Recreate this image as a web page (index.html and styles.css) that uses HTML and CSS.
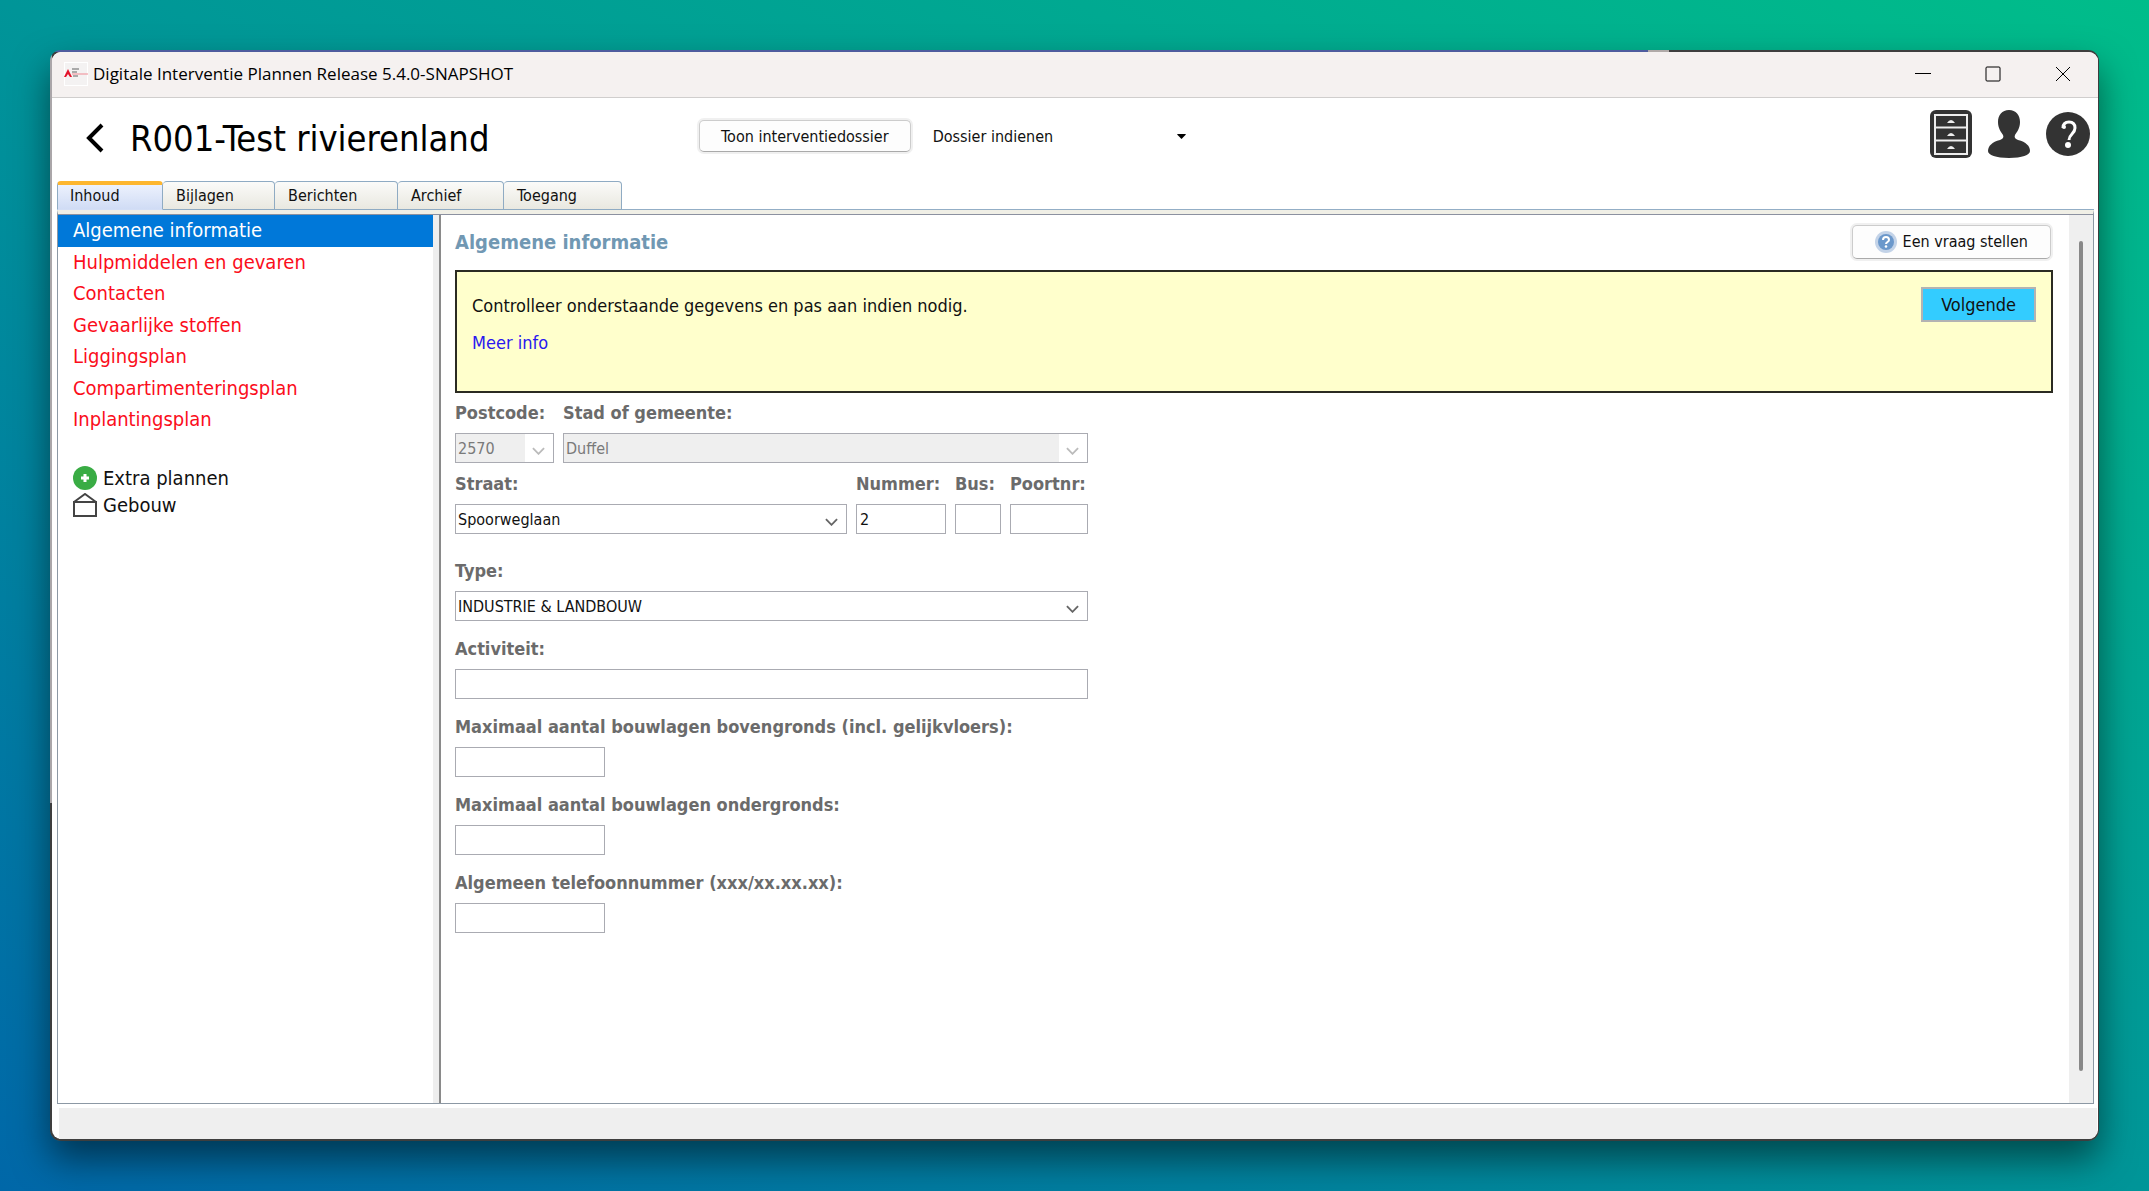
FILE: index.html
```html
<!DOCTYPE html>
<html lang="nl">
<head>
    <meta charset="UTF-8">
    <meta name="viewport" content="width=device-width, initial-scale=1.0">
    <title>Digitale Interventie Plannen</title>
    <link rel="stylesheet" href="styles.css">
</head>
<body>
    <div class="window">
        <div class="titlebar">
            <svg class="app-icon" viewBox="0 0 24 24">
                <rect width="24" height="24" fill="#fff"/>
                <rect x="1" y="1" width="22" height="22" fill="#f4f2f2"/>
                <path d="M0 15 L4 7 L8 15 L6 15 L4 12 L2 15 Z" fill="#e3132b"/>
                <path d="M8 7h7M8 10h5M9 14h5" stroke="#aaa" stroke-width="2"/>
                <path d="M8 12h16" stroke="#f08a94" stroke-width="1"/>
            </svg>
            <span class="titlebar-text">Digitale Interventie Plannen Release 5.4.0-SNAPSHOT</span>
            <div class="window-buttons">
                <button type="button" aria-label="Minimaliseren">
                    <svg viewBox="0 0 16 16"><path d="M0 7.500h16"/></svg>
                </button>
                <button type="button" aria-label="Maximaliseren">
                    <svg viewBox="0 0 16 16"><rect x="1" y="1" width="14" height="14" rx="1"/></svg>
                </button>
                <button type="button" aria-label="Sluiten">
                    <svg viewBox="0 0 16 16"><path d="M1 1l14 14M15 1L1 15"/></svg>
                </button>
            </div>
        </div>

        <header class="header">
            <div class="header-title">
                <button type="button" class="back" aria-label="Terug">
                    <svg viewBox="0 0 20 30"><path d="M17 2L4 15l13 13"/></svg>
                </button>
                <h1>R001-Test rivierenland</h1>
            </div>
            <div class="header-actions">
                <button type="button" class="btn">Toon interventiedossier</button>
                <div class="action-menu">
                    <select aria-label="Actie">
                        <option>Dossier indienen</option>
                    </select>
                    <svg class="caret" viewBox="0 0 10 6"><path d="M0 0h10v1L5 6 0 1z"/></svg>
                </div>
            </div>
            <div class="header-icons">
                <button type="button" aria-label="Dossiers">
                    <svg width="42" height="48" viewBox="0 0 42 48">
                        <rect width="42" height="48" rx="6" fill="#333"/>
                        <rect x="5" y="5" width="32" height="39" fill="none" stroke="#eee" stroke-width="2"/>
                        <path d="M5 17.500h32M5 30.500h32" stroke="#eee" stroke-width="2"/>
                        <path d="M17 13q4-6 8 0zM17 26q4-6 8 0zM17 39q4-6 8 0z" fill="#eee"/>
                    </svg>
                </button>
                <button type="button" aria-label="Gebruiker">
                    <svg width="42" height="48" viewBox="0 0 42 48">
                        <path d="M21 0c7 0 11 5 11 12 0 6-3 10-5 13-1 2 0 4 3 5 8 2 12 6 12 11 0 4-8 7-21 7S0 45 0 41c0-5 4-9 12-11 3-1 4-3 3-5-2-3-5-7-5-13C10 5 14 0 21 0z" fill="#333"/>
                    </svg>
                </button>
                <button type="button" aria-label="Help">
                    <svg width="44" height="48" viewBox="0 0 44 48">
                        <circle cx="22" cy="24" r="22" fill="#333"/>
                        <path d="M17 18c0-4 2-6 6-6s6 2 6 6c0 6-6 6-6 12" fill="none" stroke="#fff" stroke-width="3"/>
                        <circle cx="18" cy="17" r="2" fill="#fff"/>
                        <circle cx="22" cy="35" r="3" fill="#fff"/>
                    </svg>
                </button>
            </div>
        </header>

        <nav class="tabs">
            <a href="#inhoud" class="tab tab-inhoud active">Inhoud</a>
            <a href="#bijlagen" class="tab tab-bijlagen">Bijlagen</a>
            <a href="#berichten" class="tab tab-berichten">Berichten</a>
            <a href="#archief" class="tab tab-archief">Archief</a>
            <a href="#toegang" class="tab tab-toegang">Toegang</a>
        </nav>

        <div class="pane">
            <aside class="sidebar">
                <ul class="menu">
                    <li class="selected"><a href="#algemeen">Algemene informatie</a></li>
                    <li><a href="#hulpmiddelen">Hulpmiddelen en gevaren</a></li>
                    <li><a href="#contacten">Contacten</a></li>
                    <li><a href="#stoffen">Gevaarlijke stoffen</a></li>
                    <li><a href="#ligging">Liggingsplan</a></li>
                    <li><a href="#compartimentering">Compartimenteringsplan</a></li>
                    <li><a href="#inplanting">Inplantingsplan</a></li>
                </ul>
                <ul class="extra">
                    <li>
                        <a href="#extra">
                            <svg viewBox="0 0 24 24"><circle cx="12" cy="12" r="12" fill="#39ac44"/><path d="M12 8v8M8 12h8" stroke="#fff" stroke-width="3"/></svg>
                            Extra plannen
                        </a>
                    </li>
                    <li>
                        <a href="#gebouw">
                            <svg viewBox="0 0 24 24"><path d="M1 9h22v14H1zM1 9L12 1l11 8" fill="none" stroke="#444" stroke-width="2"/></svg>
                            Gebouw
                        </a>
                    </li>
                </ul>
            </aside>

            <main class="content">
                <div class="content-head">
                    <h2>Algemene informatie</h2>
                    <button type="button" class="btn btn-question">
                        <svg viewBox="0 0 22 22">
                            <circle cx="11" cy="11" r="11" fill="#c3d3e8"/>
                            <circle cx="11" cy="11" r="8" fill="#6b98cb"/>
                            <path d="M8 9c0-4 6-4 6 0 0 2-3 2-3 4" fill="none" stroke="#fff" stroke-width="2"/>
                            <circle cx="11" cy="15.500" r="1.300" fill="#fff"/>
                        </svg>
                        Een vraag stellen
                    </button>
                </div>

                <div class="notice">
                    <div class="notice-text">
                        <p>Controlleer onderstaande gegevens en pas aan indien nodig.</p>
                        <a href="#info">Meer info</a>
                    </div>
                    <button type="button" class="btn-next">Volgende</button>
                </div>

                <form class="form">
                    <div class="row row-city">
                        <div class="field">
                            <label for="postcode">Postcode:</label>
                            <div class="combo disabled">
                                <select id="postcode" disabled><option>2570</option></select>
                                <svg viewBox="0 0 14 8"><path d="M1 1l6 6 6-6"/></svg>
                            </div>
                        </div>
                        <div class="field">
                            <label for="stad">Stad of gemeente:</label>
                            <div class="combo disabled">
                                <select id="stad" disabled><option>Duffel</option></select>
                                <svg viewBox="0 0 14 8"><path d="M1 1l6 6 6-6"/></svg>
                            </div>
                        </div>
                    </div>
                    <div class="row row-street">
                        <div class="field">
                            <label for="straat">Straat:</label>
                            <div class="combo">
                                <select id="straat"><option>Spoorweglaan</option></select>
                                <svg viewBox="0 0 14 8"><path d="M1 1l6 6 6-6"/></svg>
                            </div>
                        </div>
                        <div class="field">
                            <label for="nummer">Nummer:</label>
                            <input type="text" id="nummer" value="2">
                        </div>
                        <div class="field">
                            <label for="bus">Bus:</label>
                            <input type="text" id="bus">
                        </div>
                        <div class="field">
                            <label for="poortnr">Poortnr:</label>
                            <input type="text" id="poortnr">
                        </div>
                    </div>
                    <div class="field field-type">
                        <label for="type">Type:</label>
                        <div class="combo">
                            <select id="type"><option>INDUSTRIE &amp; LANDBOUW</option></select>
                            <svg viewBox="0 0 14 8"><path d="M1 1l6 6 6-6"/></svg>
                        </div>
                    </div>
                    <div class="field">
                        <label for="activiteit">Activiteit:</label>
                        <input type="text" id="activiteit">
                    </div>
                    <div class="field">
                        <label for="bovengronds">Maximaal aantal bouwlagen bovengronds (incl. gelijkvloers):</label>
                        <input type="text" id="bovengronds" class="short">
                    </div>
                    <div class="field">
                        <label for="ondergronds">Maximaal aantal bouwlagen ondergronds:</label>
                        <input type="text" id="ondergronds" class="short">
                    </div>
                    <div class="field">
                        <label for="telefoon">Algemeen telefoonnummer (xxx/xx.xx.xx):</label>
                        <input type="text" id="telefoon" class="short">
                    </div>
                </form>
            </main>

            <div class="scrollbar"><div class="thumb"></div></div>
        </div>

        <footer class="statusbar"></footer>
    </div>
</body>
</html>
```
FILE: styles.css
```css
* {
    box-sizing: border-box;
}
body {
    margin: 0;
    padding: 50px;
    min-height: 100vh;
    display: flex;
    background: linear-gradient(to top right, #0067a8, #009598 50%, #00bd8a);
    font-family: "DejaVu Sans Condensed", Tahoma, sans-serif;
    font-size: 16px;
    color: #111;
}
h1, h2, p, ul {
    margin: 0;
    padding: 0;
}
ul {
    list-style: none;
}
a {
    color: inherit;
    text-decoration: none;
}
button, input, select {
    font-family: inherit;
    font-size: 16px;
    color: inherit;
    margin: 0;
}
button {
    background: none;
    border: 0;
    padding: 0;
}
svg {
    display: block;
}

/* window frame */
.window {
    flex: 1;
    min-width: 0;
    display: flex;
    flex-direction: column;
    border: 2px solid transparent;
    border-right-width: 1px;
    border-radius: 11px;
    background:
        linear-gradient(#fff, #fff) padding-box,
        linear-gradient(90deg, #4f5c9e 78%, #b0aaa8 78%, #b0aaa8 79%, #3e3e3e 79%) top / 100% 2px no-repeat border-box,
        linear-gradient(#aaa6a9 69%, #3e3e3e 69%) left / 2px 100% no-repeat border-box,
        linear-gradient(#3e3e3e, #3e3e3e) border-box;
    box-shadow: 0 18px 36px rgba(0, 0, 0, 0.5);
}
.titlebar {
    display: flex;
    align-items: center;
    height: 46px;
    padding: 0 0 2px 12px;
    background-color: #f5f1f0;
    border-bottom: 1px solid #d0cecd;
    border-radius: 9px 9px 0 0;
    font-family: "Open Sans", "Segoe UI", sans-serif;
    font-size: 17px;
    color: #000;
}
.app-icon {
    width: 24px;
    height: 24px;
    margin-right: 5px;
}
.window-buttons {
    margin-left: auto;
    display: flex;
}
.window-buttons button {
    width: 70px;
    height: 42px;
    display: flex;
    align-items: center;
    justify-content: center;
}
.window-buttons svg {
    width: 16px;
    height: 16px;
    fill: none;
    stroke: #000;
    stroke-width: 1;
}

/* header */
.header {
    display: flex;
    align-items: flex-start;
    height: 83px;
    padding: 12px 8px 0 33px;
}
.header-title {
    display: flex;
    align-items: center;
    width: 614px;
    height: 56px;
}
.back {
    margin-right: 25px;
}
.back svg {
    width: 20px;
    height: 30px;
    fill: none;
    stroke: #000;
    stroke-width: 4;
}
h1 {
    font-size: 36px;
    font-weight: normal;
    white-space: nowrap;
    color: #000;
}
.header-actions {
    display: flex;
    align-items: center;
    gap: 20px;
    padding-top: 10px;
}
.btn {
    height: 32px;
    padding: 0 21px;
    border: 1px solid #ccc;
    border-bottom-color: #aaa;
    border-radius: 5px;
    background-color: #fdfdfd;
    box-shadow: 0 0 0 2px #f0f0f0;
    white-space: nowrap;
}
.action-menu {
    position: relative;
    width: 264px;
}
.action-menu select {
    width: 100%;
    height: 32px;
    appearance: none;
    border: 0;
    padding: 0 0 0 2px;
    background: none;
}
.caret {
    position: absolute;
    right: 9px;
    top: 14px;
    width: 9px;
    height: 5px;
    pointer-events: none;
}
.header-icons {
    margin-left: auto;
    display: flex;
    gap: 16px;
}

/* tabs */
.tabs {
    display: flex;
    height: 29px;
    margin: 0 4px 0 5px;
    border-bottom: 1px solid #93aec6;
}
.tab {
    height: 29px;
    padding-left: 13px;
    line-height: 28px;
    border: 1px solid #8fabc3;
    border-left-width: 0;
    border-radius: 4px 4px 0 0;
    background: linear-gradient(#fbfbf9, #e9e8e0);
}
.tab.active {
    padding-left: 12px;
    border-top: 4px solid #fdb62f;
    border-left-width: 1px;
    border-bottom-color: #d3def5;
    line-height: 22px;
    background: linear-gradient(#ecf1fd, #d0dcf5);
}
.tab-inhoud {
    width: 106px;
}
.tab-bijlagen {
    width: 112px;
}
.tab-berichten {
    width: 123px;
}
.tab-archief {
    width: 106px;
}
.tab-toegang {
    width: 118px;
}

/* pane */
.pane {
    flex: 1;
    display: flex;
    margin: 0 4px 0 5px;
    border: 1px solid #8c98a4;
    border-top: 4px solid #f0efe6;
    box-shadow: inset 0 1px #8c91a0;
}
.sidebar {
    width: 383px;
    flex-shrink: 0;
    margin-top: 1px;
    border-right: 2px solid #8a8a8a;
    font-size: 20px;
    background: linear-gradient(#eee, #eee) right / 6px 100% no-repeat;
}
.menu {
    display: flex;
    flex-direction: column;
    height: 221px;
    margin-right: 6px;
    color: #fb0d1b;
}
.menu li {
    flex: 1;
    padding-left: 15px;
    line-height: 31px;
}
.menu .selected {
    background-color: #0078d9;
    color: #fff;
}
.extra {
    margin: 28px 0 0 15px;
    color: #111;
}
.extra a {
    display: flex;
    align-items: center;
    gap: 6px;
    height: 27px;
}
.extra svg {
    width: 24px;
    height: 24px;
}
.content {
    flex: 1;
    min-width: 0;
    padding: 10px 16px 16px 14px;
}
.content-head {
    display: flex;
    align-items: center;
    justify-content: space-between;
    height: 35px;
}
h2 {
    font-size: 20px;
    color: #7198b3;
}
.btn-question {
    display: flex;
    align-items: center;
    gap: 6px;
    height: 34px;
    padding: 0 22px;
    margin-right: 2px;
}
.btn-question svg {
    width: 22px;
    height: 22px;
}
.notice {
    display: flex;
    justify-content: space-between;
    align-items: flex-start;
    height: 123px;
    margin-top: 11px;
    padding: 15px;
    border: 2px solid #2b2b22;
    background-color: #ffffcc;
    font-size: 18px;
    line-height: 37px;
}
.notice a {
    color: #2a17f0;
}
.btn-next {
    height: 35px;
    padding: 0 18px;
    border: 2px solid #b3b3b3;
    background-color: #33ccff;
    font-size: 18px;
}

/* form */
.form {
    max-width: 633px;
    padding-top: 9px;
}
.row {
    display: grid;
    gap: 9px;
}
.row-city {
    grid-template-columns: 99px 1fr;
}
.row-street {
    grid-template-columns: 1fr 90px 46px 78px;
    margin-top: 10px;
}
.field {
    display: flex;
    flex-direction: column;
    gap: 9px;
    margin-top: 17px;
}
.row .field {
    margin-top: 0;
}
.field-type {
    margin-top: 26px;
}
.field label {
    font-size: 18px;
    font-weight: bold;
    line-height: 22px;
    color: #6b6b6b;
    white-space: nowrap;
}
.field input, .combo {
    width: 100%;
    height: 30px;
    border: 1px solid #aaabb2;
    background-color: #fff;
}
.field input {
    padding: 0 3px;
}
.field .short {
    width: 150px;
}
.combo {
    position: relative;
}
.combo select {
    width: 100%;
    height: 28px;
    padding: 0 30px 0 2px;
    border: 0;
    appearance: none;
    background: none;
}
.combo svg {
    position: absolute;
    right: 8px;
    top: 13px;
    width: 13px;
    height: 8px;
    fill: none;
    stroke: #666;
    stroke-width: 2;
    pointer-events: none;
}
.combo.disabled {
    background: linear-gradient(90deg, #fff, #fff) right / 28px 100% no-repeat #efefef;
}
.combo.disabled select {
    color: #7a7a7a;
    opacity: 1;
}
.combo.disabled svg {
    stroke: #bbb;
}

/* scrollbar and status bar */
.scrollbar {
    width: 24px;
    margin-top: 1px;
    padding: 26px 0 32px;
    display: flex;
    justify-content: center;
    background-color: #efefef;
}
.thumb {
    width: 4px;
    border-radius: 2px;
    background-color: #888;
}
.statusbar {
    height: 31px;
    margin: 4px 1px 0 7px;
    border-radius: 0 0 8px 0;
    background-color: #efefef;
}
```
